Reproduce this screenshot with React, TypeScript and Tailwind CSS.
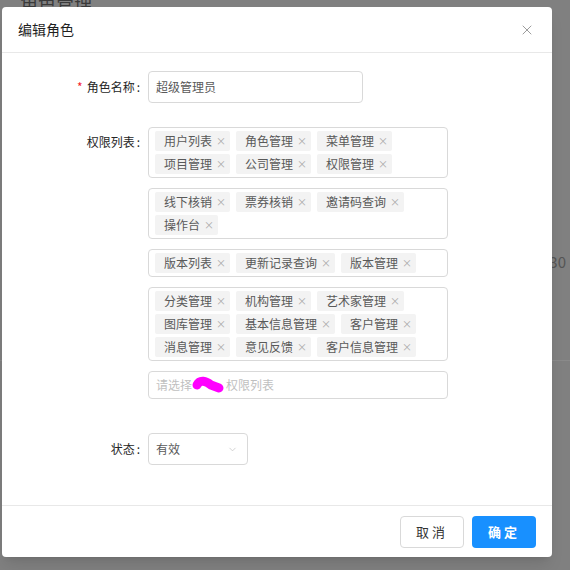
import { X, ChevronDown } from "lucide-react";

const font = { fontFamily: '"Noto Sans CJK SC", "Noto Sans", sans-serif' };

const groups: string[][] = [
  ["用户列表", "角色管理", "菜单管理", "项目管理", "公司管理", "权限管理"],
  ["线下核销", "票券核销", "邀请码查询", "操作台"],
  ["版本列表", "更新记录查询", "版本管理"],
  ["分类管理", "机构管理", "艺术家管理", "图库管理", "基本信息管理", "客户管理", "消息管理", "意见反馈", "客户信息管理"],
];

function Tag({ label }: { label: string }) {
  return (
    <span className="flex h-[20px] items-center rounded-[2px] bg-[#f3f3f3] pl-[9px] pr-[5px] text-[12px] leading-none text-[#595959]">
      {label}
      <span className="ml-[5px] flex w-[8px] justify-center text-[10px] text-[#aaaaaa]">×</span>
    </span>
  );
}

function TagBox({ items }: { items: string[] }) {
  return (
    <div className="flex w-[300px] flex-wrap gap-x-[6px] gap-y-[3px] rounded-[4px] border border-[#d9d9d9] px-[6px] pb-[3px] pt-[3px]">
      {items.map((t) => (
        <Tag key={t} label={t} />
      ))}
    </div>
  );
}

function Label({ text, required }: { text: string; required?: boolean }) {
  return (
    <div className="flex w-[140px] shrink-0 items-center justify-end pr-[2px] text-[12px] text-[#262626]">
      {required && <span className="mr-[4px] text-[#f5222d]">*</span>}
      {text}
      <span className="ml-[2px]">:</span>
    </div>
  );
}

export default function App() {
  return (
    <div className="relative h-[570px] w-[570px] overflow-hidden bg-[#808080]" style={font}>
      {/* page behind the mask */}
      <div className="h-[570px]">
        <div className="-mt-[11px] ml-[20px] text-[18px] text-[#3a3a3a]">角色管理</div>
        <div className="mt-[235px] flex justify-end pr-[4px] text-[15px] text-[#555555]">30</div>
        <div className="mt-[86px] border-b border-[#8a8a8a]" />
      </div>

      {/* modal */}
      <div className="absolute left-[2px] top-[7px] w-[550px] rounded-[4px] bg-white shadow-lg">
        <div className="flex h-[46px] items-center justify-between border-b border-[#e8e8e8] pl-[16px] pr-[17px]">
          <span className="text-[14px] text-[#1f1f1f]">编辑角色</span>
          <X size={16} strokeWidth={1.3} className="text-[#8c8c8c]" />
        </div>

        <div className="pb-[40px] pt-[18px]">
          <div className="flex h-[32px] items-center">
            <Label text="角色名称" required />
            <div className="ml-[6px] flex h-[32px] w-[215px] items-center rounded-[4px] border border-[#d9d9d9] px-[7px] text-[12px] text-[#595959]">
              超级管理员
            </div>
          </div>

          <div className="mt-[24px] flex items-start">
            <div className="flex h-[30px] items-center">
              <Label text="权限列表" />
            </div>
            <div className="ml-[6px] flex flex-col gap-[10px]">
              {groups.map((g, i) => (
                <TagBox key={i} items={g} />
              ))}
              <div className="flex h-[28px] w-[300px] items-center rounded-[4px] border border-[#d9d9d9] px-[7px] text-[12px] text-[#bfbfbf]">
                请选择
                <svg width="34" height="16" viewBox="0 0 34 16" className="overflow-visible">
                  <path
                    d="M5 8 C8 2 14 4 19 8 L27 11"
                    stroke="#ff00ff"
                    strokeWidth="9"
                    strokeLinecap="round"
                    fill="none"
                  />
                </svg>
                权限列表
              </div>
            </div>
          </div>

          <div className="mt-[34px] flex h-[32px] items-center">
            <Label text="状态" />
            <div className="ml-[6px] flex h-[32px] w-[100px] items-center justify-between rounded-[4px] border border-[#d9d9d9] pl-[7px] pr-[9px] text-[12px] text-[#595959]">
              有效
              <ChevronDown size={11} strokeWidth={1.5} className="text-[#bfbfbf]" />
            </div>
          </div>
        </div>

        <div className="flex justify-end gap-[8px] border-t border-[#e8e8e8] px-[16px] pb-[9px] pt-[10px]">
          <button className="h-[32px] w-[64px] rounded-[4px] border border-[#d9d9d9] bg-white text-[13px] tracking-[3px] text-[#333333]">
            取消
          </button>
          <button className="h-[32px] w-[64px] rounded-[4px] bg-[#1890ff] text-[13px] font-bold tracking-[3px] text-white">
            确定
          </button>
        </div>
      </div>
    </div>
  );
}
